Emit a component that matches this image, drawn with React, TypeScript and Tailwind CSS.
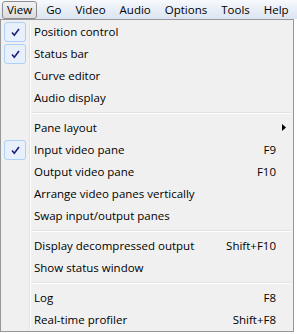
import React from 'react';

type Item =
  | { sep: true }
  | { sep?: false; label: string; checked?: boolean; shortcut?: string; submenu?: boolean };

const items: Item[] = [
  { label: 'Position control', checked: true },
  { label: 'Status bar', checked: true },
  { label: 'Curve editor' },
  { label: 'Audio display' },
  { sep: true },
  { label: 'Pane layout', submenu: true },
  { label: 'Input video pane', checked: true, shortcut: 'F9' },
  { label: 'Output video pane', shortcut: 'F10' },
  { label: 'Arrange video panes vertically' },
  { label: 'Swap input/output panes' },
  { sep: true },
  { label: 'Display decompressed output', shortcut: 'Shift+F10' },
  { label: 'Show status window' },
  { sep: true },
  { label: 'Log', shortcut: 'F8' },
  { label: 'Real-time profiler', shortcut: 'Shift+F8' },
];

const menus = ['View', 'Go', 'Video', 'Audio', 'Options', 'Tools', 'Help'];

function Check() {
  return (
    <div className="w-[22px] h-[20px] ml-[2px] rounded-[3px] border border-[#aecff7] bg-[#e8f0fb] flex items-center justify-center">
      <svg width="9" height="9" viewBox="0 0 9 9">
        <path d="M1 4.5 L3.3 7.2 L8 1" fill="none" stroke="#1a1f7a" strokeWidth="1.6" />
      </svg>
    </div>
  );
}

export default function App() {
  return (
    <div
      className="w-[297px] h-[334px] bg-white text-[11.5px] text-black overflow-hidden"
      style={{ fontFamily: '"Open Sans", "Noto Sans", sans-serif' }}
    >
      <div className="h-[19px] flex items-center gap-[4px] pl-[2px] bg-gradient-to-b from-[#f7f9fc] to-[#dbe4f1]">
        {menus.map((m, i) => (
          <div
            key={m}
            className={
              i === 0
                ? 'h-[18px] px-[4px] mt-[1px] flex items-center rounded-[3px] border border-[#8b8f95] bg-gradient-to-b from-[#f2f2f2] to-[#dcdcdc]'
                : 'h-[18px] px-[5px] flex items-center'
            }
          >
            {m}
          </div>
        ))}
      </div>
      <div className="w-[294px] h-[313px] border border-[#979797] bg-[#f0f0f0] p-[1px] relative">
        <div className="absolute top-[1px] bottom-[1px] left-[28px] w-[1px] bg-[#e2e3e3]" />
        <div className="absolute top-[1px] bottom-[1px] left-[29px] w-[1px] bg-white" />
        {items.map((it, i) =>
          it.sep ? (
            <div key={i} className="h-[8px] flex items-center pl-[30px] pr-[1px]">
              <div className="w-full">
                <div className="h-[1px] bg-[#e0e0e0]" />
                <div className="h-[1px] bg-white" />
              </div>
            </div>
          ) : (
            <div key={i} className="h-[22px] flex items-center relative">
              <div className="w-[32px] shrink-0">{it.checked && <Check />}</div>
              <span className="whitespace-nowrap">{it.label}</span>
              <span className="ml-auto mr-[16px] whitespace-nowrap">{it.shortcut}</span>
              {it.submenu && (
                <svg className="absolute right-[6px] top-[7px]" width="4" height="7" viewBox="0 0 4 7">
                  <path d="M0 0 L4 3.5 L0 7 Z" fill="#000" />
                </svg>
              )}
            </div>
          )
        )}
      </div>
    </div>
  );
}
